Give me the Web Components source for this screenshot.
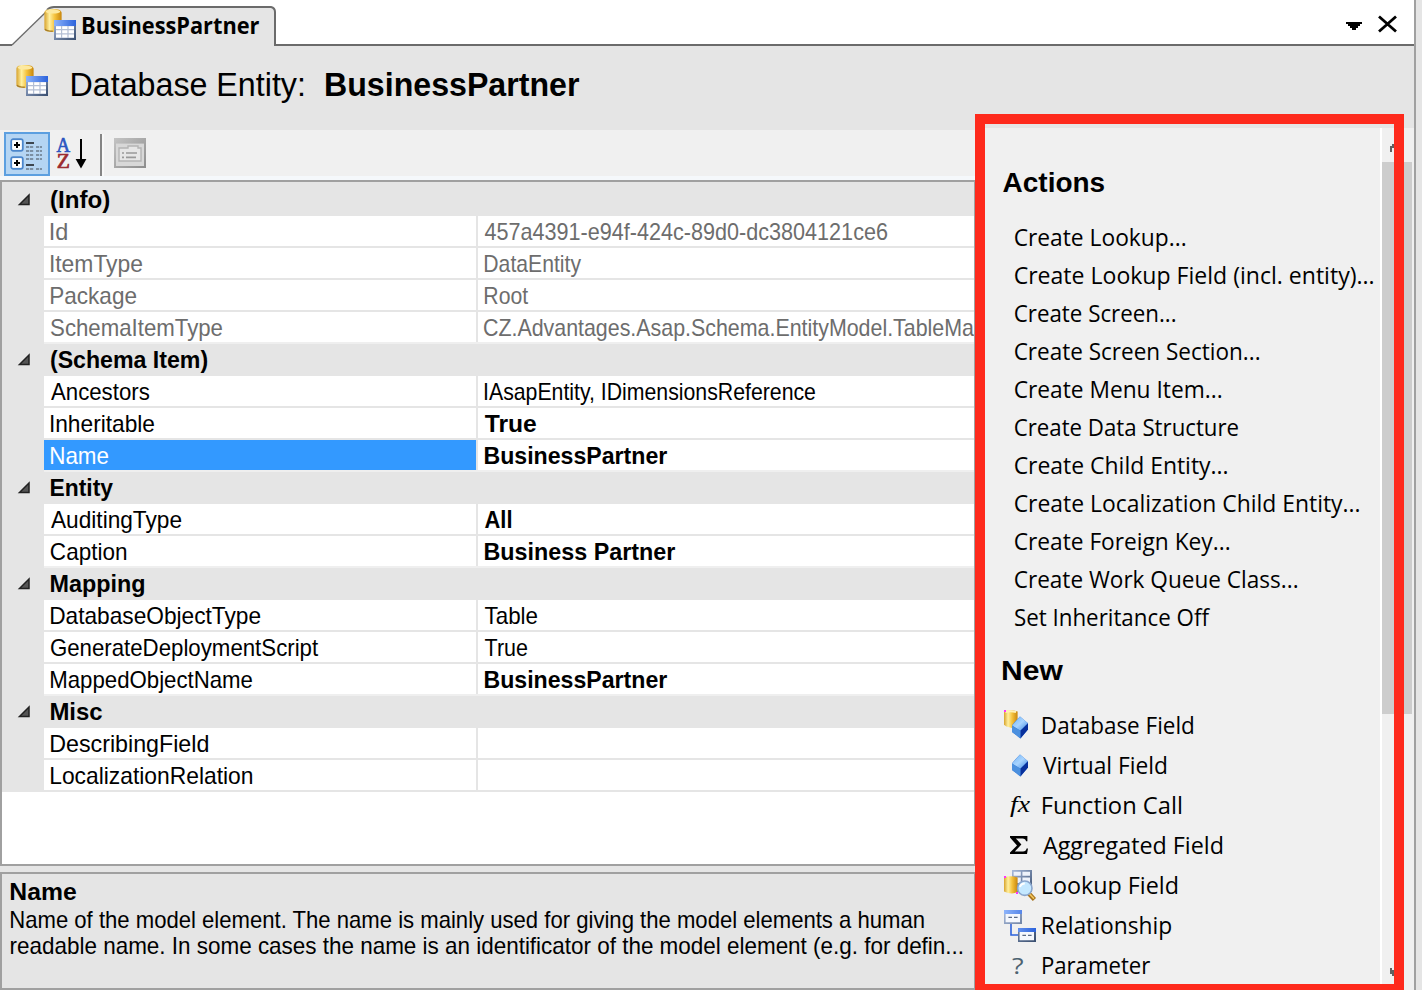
<!DOCTYPE html>
<html lang="en"><head><meta charset="utf-8"><title>BusinessPartner</title>
<style>html,body{margin:0;height:100%;overflow:hidden;background:#e5e5e5}</style></head>
<body><entity-editor></entity-editor>
<script>
const def=(name,html,init)=>customElements.define(name,class extends HTMLElement{
  connectedCallback(){
    if(this.shadowRoot)return;
    const t=document.createElement('template');
    t.innerHTML=typeof html==='function'?html(this):html;
    this.attachShadow({mode:'open'}).append(t.content.cloneNode(true));
    if(init)init(this,this.shadowRoot);
  }
});

/* A run of text whose glyphs span exactly the width given in "w". */
const ctx=document.createElement('canvas').getContext('2d');
def('fit-text','<style>:host{display:block;flex:none;white-space:pre}span{display:inline-block;transform-origin:0 0}</style><span><slot></slot></span>',(el,root)=>{
  const w=+el.getAttribute('w'),c=getComputedStyle(el);
  el.style.width=w+'px';
  /* measured at ten times the size, because ink bounds are whole pixels */
  ctx.font=`${c.fontWeight} ${parseFloat(c.fontSize)*10}px ${c.fontFamily}`;
  const m=ctx.measureText(el.textContent),l=m.actualBoundingBoxLeft/10;
  const s=w/(l+m.actualBoundingBoxRight/10);
  root.querySelector('span').style.transform=`translateX(${l*s}px) scaleX(${s})`;
});

const defs=`<defs>
<linearGradient id="y"><stop offset="0" stop-color="#d8a32c"/><stop offset=".3" stop-color="#fff0a0"/><stop offset=".6" stop-color="#f5c23c"/><stop offset="1" stop-color="#c8860c"/></linearGradient>
<linearGradient id="b"><stop offset="0" stop-color="#8db4fb"/><stop offset="1" stop-color="#2b62dc"/></linearGradient>
<linearGradient id="s" x2="1" y2="1"><stop offset="0" stop-color="#a9bbdc"/><stop offset="1" stop-color="#384d6e"/></linearGradient>
<linearGradient id="d" x2="1" y2="1"><stop offset="0" stop-color="#6fb2f5"/><stop offset=".5" stop-color="#a8d4ff"/><stop offset="1" stop-color="#3f88e0"/></linearGradient>
<linearGradient id="g" x2="1" y2="1"><stop offset="0" stop-color="#c4c4c4"/><stop offset="1" stop-color="#8c8c8c"/></linearGradient></defs>`;
const diamond='<path d="M8 3.2 L12 6.6 L12 9.8 L8.2 14.2 L4 11 L4 7.6Z" fill="#2e6fd0"/><path d="M8 3.2L12 6.6L8.2 10.4L4 7.8Z" fill="url(#d)"/><path d="M8.2 10.4L12 6.6V9.8L8.2 14.2Z" fill="#08309c"/><path d="M4 7.8L8.2 10.4V14.2L4 11Z" fill="#4b90df"/>';
const icons={
 db:`<path d="M.2 2.2Q.2.5 4.4.5T8.8 2.2V10.4Q8.6 12 4.4 12T.2 10.4Z" fill="url(#y)"/><ellipse cx="4.5" cy="1.8" rx="3.7" ry="1" fill="#fde9a0"/><path d="M.5 10.5Q1 11.6 4.4 11.6" stroke="#a87e28" stroke-width=".7" fill="none"/>
  <path d="M5 6H16V16H5Z" fill="url(#s)"/><path d="M5 6H16V9H5Z" fill="url(#b)"/><path d="M6 9H15V15H6Z" fill="#b4bfd4"/><path d="M6 9.1h2.5v1.4H6zm3.1 0h2.6v1.4H9.1zm3.2 0H15v1.4h-2.7zM6 11.1h2.5v1.5H6zm3.1 0h2.6v1.5H9.1zm3.2 0H15v1.5h-2.7zM6 13.3h2.5v1.5H6zm3.1 0h2.6v1.5H9.1zm3.2 0H15v1.5h-2.7z" fill="#fff"/>`,
 dbfield:`<path d="M0 .8Q3 -.6 6.8.8V8L4 9 1.2 8.2 0 7.4Z" fill="url(#y)"/><path d="M.7 1Q3 .2 6 1" stroke="#fff1b4" fill="none"/><path d="M0 0h1v1H0z" fill="#f3f"/>${diamond}`,
 virtual:`<g transform="translate(0 -1)">${diamond}</g>`,
 fx:`<text x="3" y="11.2" font-family="Liberation Serif,serif" font-style="italic" font-size="12" textLength="10" lengthAdjust="spacingAndGlyphs">fx</text>`,
 sum:`<path d="M3 3H11.7V5.6H11Q10.8 4.2 9.2 4.2H5.9L8.7 7.3 5.4 10.7H9.5Q11 10.7 11.3 9.2H12L11.5 12H3V11.3L6.5 7.7 3 3.7Z"/>`,
 lookup:`<path d="M4 0H14V11H4Z" fill="url(#s)"/><path d="M4.8.9h3.6v2H4.8zm4.400 0H13v2H9.200zM4.800 3.800h3.600v2.700H4.800zm4.400 0H13v2.700H9.200z" fill="#eef2fa"/><path d="M0 3.800Q3 2.400 6.800 3.800V10.800Q5 12.200 2 11.500L0 10.800Z" fill="url(#y)"/><path d="M0 3h1v1H0zM6 11h1v1H6z" fill="#f3f"/><path d="M12.300 11.600L15.200 14.700" stroke="#a67018" stroke-width="2.200"/><path d="M12.600 11.800L15 14.300" stroke="#f0c45c" stroke-width=".8"/><circle cx="10.400" cy="9.100" r="3.600" fill="#c4e8ff" stroke="#8aa5cc" stroke-width=".8"/><path d="M8 8.500Q8.500 6.800 10.400 6.800" stroke="#fff" fill="none"/>`,
 rel:`<path d="M3.500 7V12.500H7" fill="none" stroke="#2b62dc" stroke-width=".8"/><path d="M0 0H9V7H0ZM7 9H16V16H7Z" fill="url(#s)"/><path d="M0 0H9V2H0ZM7 9H16V11H7Z" fill="url(#b)"/><path d="M.8 2H8V6.100H.8ZM7.800 11H15V15.100H7.800Z" fill="#f4f7fd"/><path d="M2.200 3.700H4M5 3.700H6.800M9.200 12.700H11M12 12.700H13.800" stroke="#596985" stroke-width=".7"/>`,
 par:`<text x="4" y="11.800" font-family="Open Sans,sans-serif" font-size="11" fill="#4d6270" textLength="5.800" lengthAdjust="spacingAndGlyphs">?</text>`,
 cat:`<g fill="#d8e7f7" stroke="#4b86cc" stroke-width=".9"><rect x=".6" y=".6" width="5.800" height="5.800" rx="1"/><rect x=".6" y="9.600" width="5.800" height="5.800" rx="1"/></g><path d="M1.200 1.200H5.800V5.800H1.200ZM1.200 10.200H5.800V14.800H1.200Z" fill="#fff"/><path d="M2 3.500H5M3.500 2V5M2 12.500H5M3.500 11V14" stroke="#000"/><path d="M8 2.500H12M8 13.500H12" stroke="#3d4650" stroke-width="1.100"/><path d="M8 4.500H11.800M8 6.500H11.800M8 8.500H11.800M8 10.500H11.800M13 4.500H16M13 6.500H16M13 8.500H16M13 10.500H16M13 15.500H16M8 15.500H11.800" stroke="#7c90a4" stroke-width=".9" stroke-dasharray="1.600 .4"/>`,
 az:`<g font-family="Liberation Serif,serif" stroke-width=".35"><text x=".2" y="7" font-size="10.300" fill="#2b55c0" stroke="#2b55c0" textLength="6.800" lengthAdjust="spacingAndGlyphs">A</text><text x=".4" y="15.100" font-size="10.500" fill="#9c2b30" stroke="#9c2b30" textLength="6.600" lengthAdjust="spacingAndGlyphs">Z</text></g><path d="M12.500.5V14" stroke="#000"/><path d="M9.800 10.500H15.200L12.500 15.300Z"/>`,
 page:`<path d="M0 0H16V15H0Z" fill="url(#g)"/><path d="M1 2.800H15V14H1Z" fill="#d8d8d8"/><path d="M2.500 11.500V5H7V4H12V5H13.500V11.500Z" fill="#e6e6e6" stroke="#b4b4b4" stroke-width=".7"/><path d="M4 7.500H5M6 7.500H11.500M4 9.700H5M6 9.700H11" stroke="#999" stroke-width=".8"/>`
};
def('ui-icon',el=>`<style>:host{display:block;flex:none;width:32px;height:32px}svg{display:block;overflow:visible}</style><svg width="32" height="32" viewBox="0 0 16 16">${defs}${icons[el.getAttribute('name')]}</svg>`);

def('document-tabs',`<style>:host{display:flex;height:46px;background:#fff;justify-content:space-between;position:relative;font:700 24px "Open Sans",sans-serif;width:1414px}
 .shape{position:absolute;left:0;top:0}.tab{display:flex;position:relative;padding:8px 0 0 44px}.tab fit-text{margin-left:7px;line-height:34px}
 .tools{display:block;margin:15px 17px 0 0}</style>
 <svg class="shape" width="1414" height="46"><path d="M0 46V45H12L47 11Q52 7 56 7H271Q275 8 275 12V45H1414V46Z" fill="#e5e5e5"/><path d="M275 45H1414M0 45H12" stroke="#6b6b6b" stroke-width="2"/><path d="M12 45L47 11" fill="none" stroke="#6b6b6b" stroke-width="1.300"/><path d="M47 10Q50 7 54 7H271Q275 8 275 12V46" fill="none" stroke="#6b6b6b" stroke-width="2"/></svg>
 <div class="tab"><ui-icon name="db"></ui-icon><fit-text w="176">BusinessPartner</fit-text></div>
 <svg class="tools" width="52" height="18"><path d="M1 7H17V9H15V11H13V13H11V15H7V13H5V11H3V9H1Z"/><path d="M34 1.500L51 16.500M51 1.500L34 16.500" stroke="#000" stroke-width="2.800"/></svg>`);

def('entity-title',`<style>:host{display:flex;height:84px;background:#e5e5e5;font:33px/40px "Liberation Sans",sans-serif}ui-icon{margin:18px 0 0 16px}fit-text{margin:19px 0 0 24px}b{display:block;margin-left:-1px}</style>
 <ui-icon name="db"></ui-icon><fit-text w="231">Database Entity:</fit-text><b><fit-text w="253">BusinessPartner</fit-text></b>`);

def('grid-toolbar',`<style>:host{display:flex;height:46px;background:#f0f0f0;border-bottom:4px solid #f5f8fb;align-items:flex-start}
 .on{box-sizing:border-box;width:46px;height:44px;margin:2px 0 0 4px;border:2px solid #5c9fe0;background:#b5d5f3;padding:4px 0 0 4px}
 .az{margin:8px 0 0 6px}.sep{width:2px;height:42px;background:#858585;margin:4px 0 0 12px;border-right:2px solid #f8f8f8}.pg{margin:8px 0 0 10px}</style>
 <div class="on"><ui-icon name="cat"></ui-icon></div><ui-icon class="az" name="az"></ui-icon><div class="sep"></div><ui-icon class="pg" name="page"></ui-icon>`);

def('grid-group',el=>`<style>:host{display:block}header{display:flex;height:32px;background:#e5e5e5;font-weight:700}svg{width:42px;height:32px;margin-right:7px;flex:none}section{margin-left:42px}</style>
 <header><svg><path d="M17.500 20.500L27 11V20.500Z" fill="#555" stroke="#222" stroke-width="1.500"/></svg><fit-text w="${el.getAttribute('w')}">${el.getAttribute('label')}</fit-text></header><section><slot></slot></section>`);

def('grid-row',el=>{const a=n=>el.getAttribute(n);return `<style>:host{display:flex;height:30px;border-bottom:2px solid #e5e5e5;background:#fff;line-height:32px}
 :host([dim]){color:#6d6d6d}:host(:last-of-type){border-bottom-color:#efefef}:host([end]){border-bottom-color:#e5e5e5}
 .k{width:425px;flex:none;border-right:2px solid #e5e5e5;height:30px;padding-left:7px}
 :host([on]) .k{background:#3399ff;color:#fff}
 .v{padding-left:${a('o')||7}px;height:30px}:host([strong]) .v{font-weight:700}</style>
 <div class="k"><fit-text w="${a('kw')}">${a('k')}</fit-text></div><div class="v">${a('v')?`<fit-text w="${a('vw')}">${a('v')}</fit-text>`:''}</div>`});

const row=(k,kw,v='',vw=0,x='')=>`<grid-row k="${k}" kw="${kw}" v="${v}" vw="${vw}" ${x}></grid-row>`;
def('property-grid',`<style>:host{display:block;box-sizing:border-box;width:975px;height:686px;border:2px solid #a0a0a0;border-right-width:1px;background:#fff;overflow:hidden;font:24px/32px "Liberation Sans",sans-serif;color:#000}
 .rows{background:linear-gradient(90deg,#e5e5e5 42px,#fff 42px);padding-top:2px;box-shadow:inset 0 2px #e5e5e5}</style>
 <div class="rows"><grid-group label="(Info)" w="58">${row('Id',16,'457a4391-e94f-424c-89d0-dc3804121ce6',402,'dim')}${row('ItemType',91,'DataEntity',96,'dim')}${row('Package',85,'Root',43,'dim')}${row('SchemaItemType',171,'CZ.Advantages.Asap.Schema.EntityModel.TableMa',490,'dim o="6"')}</grid-group>
 <grid-group label="(Schema Item)" w="156">${row('Ancestors',98,'IAsapEntity, IDimensionsReference',330)}${row('Inheritable',103,'True',51,'strong')}${row('Name',57,'BusinessPartner',182,'strong on')}</grid-group>
 <grid-group label="Entity" w="62">${row('AuditingType',130,'All',26,'strong')}${row('Caption',75,'Business Partner',190,'strong')}</grid-group>
 <grid-group label="Mapping" w="93">${row('DatabaseObjectType',209,'Table',52)}${row('GenerateDeploymentScript',267,'True',42)}${row('MappedObjectName',201,'BusinessPartner',182,'strong')}</grid-group>
 <grid-group label="Misc" w="51">${row('DescribingField',157)}${row('LocalizationRelation',201,'',0,'end')}</grid-group></div>`);

def('help-pane',`<style>:host{display:block;box-sizing:border-box;width:975px;height:118px;margin-top:6px;border:2px solid #a0a0a0;border-right-width:1px;padding:5px 0 0 9px;font:24px/26px "Liberation Sans",sans-serif}b{display:block;height:28px}</style>
 <b><fit-text w="65">Name</fit-text></b><fit-text w="913">Name of the model element. The name is mainly used for giving the model elements a human</fit-text><fit-text w="951">readable name. In some cases the name is an identificator of the model element (e.g. for defin...</fit-text>`);

const acts=[['Create Lookup...',170],['Create Lookup Field (incl. entity)...',358],['Create Screen...',160],['Create Screen Section...',244],['Create Menu Item...',206],['Create Data Structure',223],['Create Child Entity...',212],['Create Localization Child Entity...',344],['Create Foreign Key...',214],['Create Work Queue Class...',282],['Set Inheritance Off',195]];
const news=[['dbfield','Database Field',150],['virtual','Virtual Field',123],['fx','Function Call',138],['sum','Aggregated Field',179],['lookup','Lookup Field',134],['rel','Relationship',128],['par','Parameter',107]];
def('action-panel',`<style>:host{display:flex;position:relative;box-sizing:border-box;width:439px;height:862px;background:#f0f0f0;font:24px/38px "Open Sans",sans-serif;color:#000}
 main{width:405px;box-sizing:border-box;padding:35px 0 0 28px;overflow:hidden}
 h2{margin:0;font:700 27px/40px "Liberation Sans",sans-serif}
 .a{padding:15px 0 15px 12px}.n{padding-top:14px}.n div{display:flex;height:40px;line-height:40px}.n ui-icon{margin:5px 7px 0 1px}
 aside{width:32px;border-left:2px solid #fff;display:flex;flex-direction:column}aside i{display:block;width:30px;height:552px;background:#cdcdcd}svg{display:block;height:34px;width:30px}
 svg:last-child{margin-top:auto}
 .frame{position:absolute;left:0;top:-14px;width:409px;height:860px;border:10px solid #fe2a1c}</style>
 <main><h2><fit-text w="101">Actions</fit-text></h2><div class="a">${acts.map(([t,w])=>`<fit-text w="${w}">${t}</fit-text>`).join('')}</div>
 <h2><fit-text w="60">New</fit-text></h2><div class="n">${news.map(([i,t,w])=>`<div><ui-icon name="${i}"></ui-icon><fit-text w="${w}">${t}</fit-text></div>`).join('')}</div></main>
 <aside><svg><path d="M8 24V18H10V16H18V24H14V20H10V24Z" fill="#606060"/></svg><i></i><svg><path d="M8 12V18H10V20H18V14H10V12Z" fill="#606060"/></svg></aside><div class="frame"></div>`);

def('entity-editor',`<style>:host{display:block;box-sizing:border-box;width:1416px;height:990px;border-right:2px solid #a0a0a0;background:#e5e5e5;overflow:hidden}
 .body{display:flex}.left{width:975px}action-panel{margin-top:-2px}</style>
 <document-tabs></document-tabs><entity-title></entity-title>
 <div class="body"><div class="left"><grid-toolbar></grid-toolbar><property-grid></property-grid><help-pane></help-pane></div><action-panel></action-panel></div>`);
</script></body></html>
